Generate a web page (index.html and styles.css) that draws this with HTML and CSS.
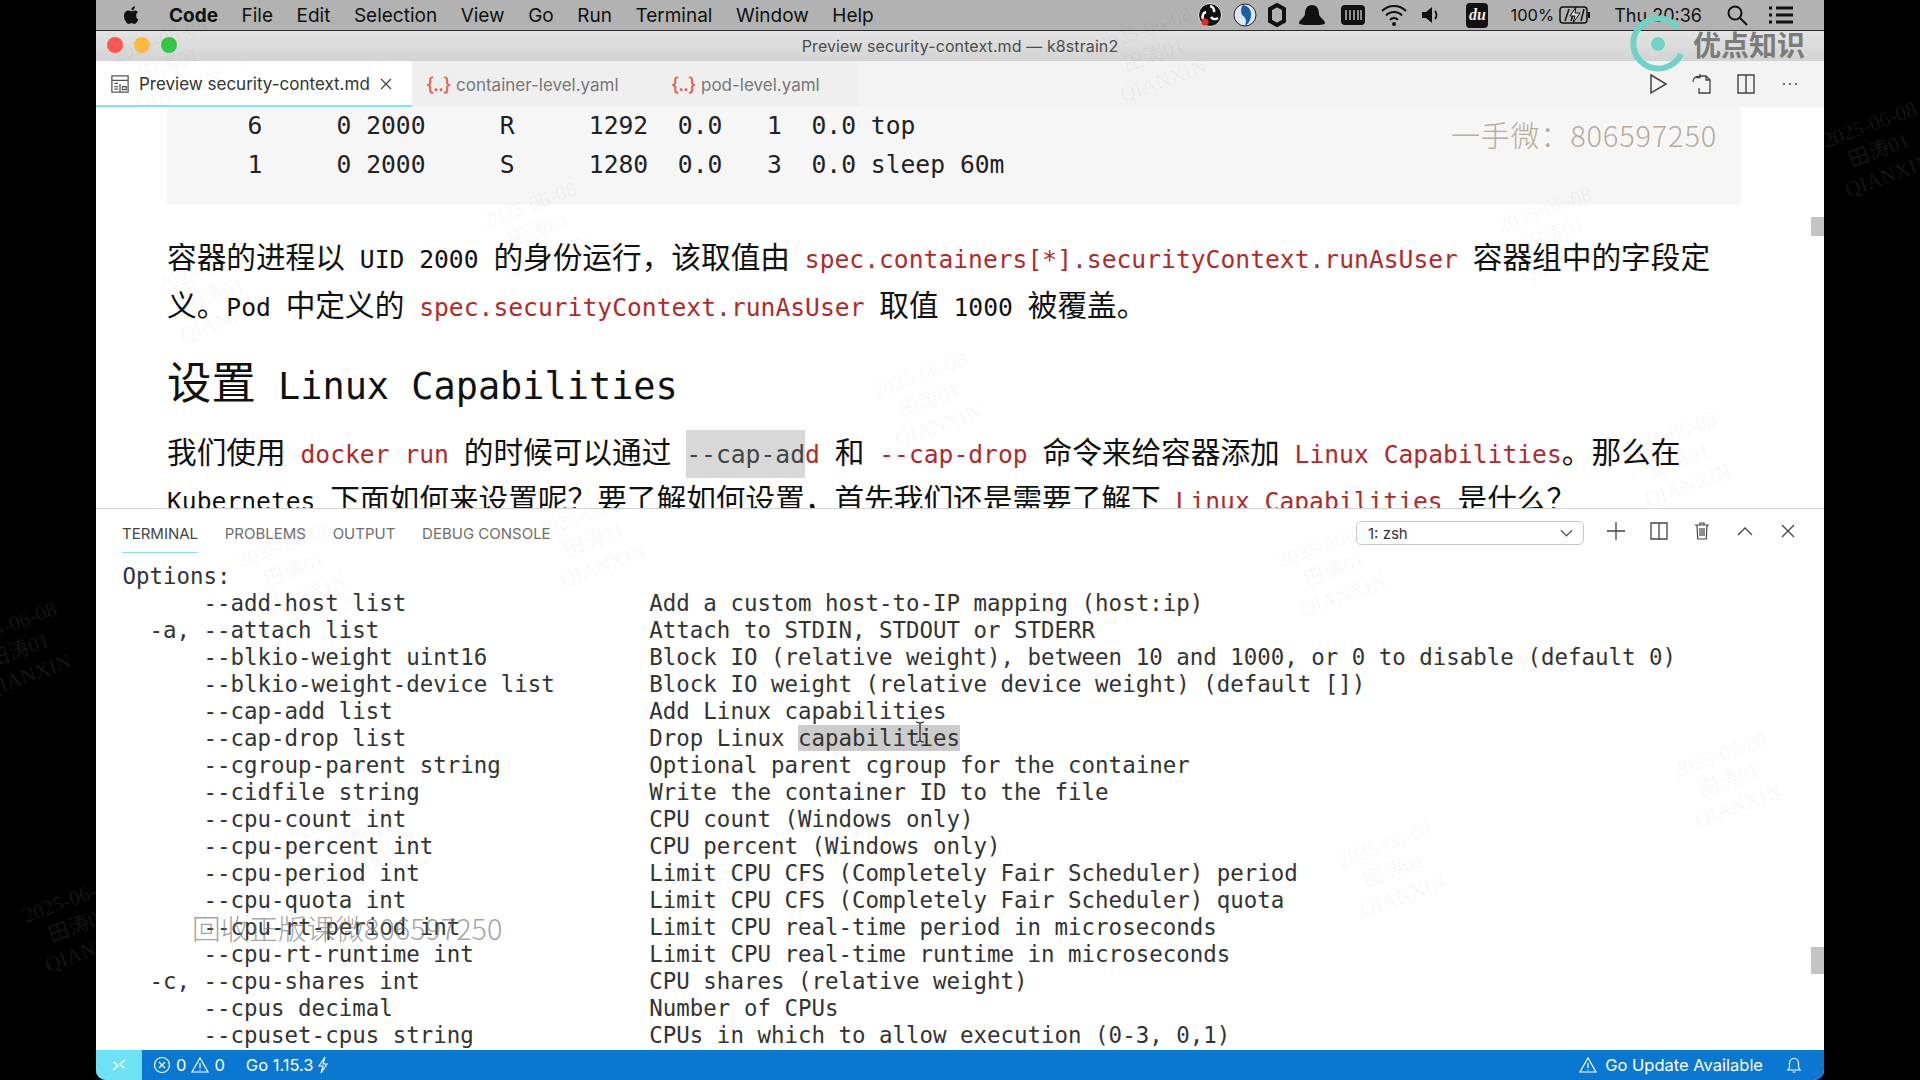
FILE: index.html
```html
<!DOCTYPE html>
<html lang="zh">
<head>
<meta charset="utf-8">
<title>Preview security-context.md — k8strain2</title>
<link rel="stylesheet" href="styles.css">
</head>
<body>
<div class="window">
  <header class="menubar">
    <svg class="apple" viewBox="0 0 20 24"><path d="M14.6 12.7c0-2.5 2-3.6 2.1-3.7-1.2-1.700-3-2-3.600-2-1.500-.2-3 .9-3.800.9S7.300 7 6 7c-1.700 0-3.200 1-4.100 2.500-1.700 3-.4 7.500 1.300 10 .8 1.200 1.800 2.600 3.100 2.500 1.200 0 1.700-.8 3.200-.8s1.900.8 3.200.8 2.200-1.200 3-2.400c1-1.400 1.400-2.700 1.400-2.800-.1 0-2.500-1-2.500-4.100zM12.200 5.300c.7-.8 1.100-2 1-3.100-1 0-2.200.7-2.900 1.500-.6.700-1.200 1.900-1 3 1.100.1 2.200-.6 2.900-1.400z"/></svg>
    <nav class="menus">
      <span class="menu-app">Code</span><span>File</span><span>Edit</span><span>Selection</span><span>View</span><span>Go</span><span>Run</span><span>Terminal</span><span>Window</span><span>Help</span>
    </nav>
    <div class="tray">
      <svg class="t-ic" viewBox="0 0 24 24"><circle cx="12" cy="12" r="11.500" fill="#111" stroke="#eee"/><path d="M12 3a5 5 0 0 1 4 6M20 15a5 5 0 0 1-7-1M5 16a5 5 0 0 1 3-7" fill="none" stroke="#fff" stroke-width="2.500"/><circle cx="7" cy="19" r="3.500" fill="#e8262a"/></svg>
      <svg class="t-ic" viewBox="0 0 24 24"><circle cx="12" cy="12" r="11" fill="#dfe6ee" stroke="#222"/><path d="M10 2c7 1 10 8 7 15-1 3-3 5-5 5 2-4 1-7-2-9-2-2-3-8 0-11z" fill="#1b5fa6"/></svg>
      <svg class="t-ic t-hex" viewBox="0 0 18 24"><path d="M9 2l7 4v12l-7 4-7-4V6z" fill="none" stroke="#111" stroke-width="4"/></svg>
      <svg class="t-ic t-wide" viewBox="0 0 28 24"><path d="M14 2c5 0 7 4 7 9 0 3 6 6 6 9 0 2-6 2-13 2S1 22 1 20c0-3 6-6 6-9 0-5 2-9 7-9z" fill="#111"/></svg>
      <svg class="t-ic t-wide" viewBox="0 0 26 24"><rect x="1" y="2" width="24" height="20" rx="4" fill="#111"/><path d="M6 7v10M10 7v10M14 7v10M18 7v10M21 7v10" stroke="#bbb" stroke-width="1.500"/></svg>
      <svg class="t-ic t-wide" viewBox="0 0 28 24"><path d="M2 8a17 17 0 0 1 24 0M6 12.500a11 11 0 0 1 16 0M10 17a5 5 0 0 1 8 0" fill="none" stroke="#111" stroke-width="2"/><circle cx="14" cy="21" r="2" fill="#111"/></svg>
      <svg class="t-ic t-vol" viewBox="0 0 20 24"><path d="M1 9h4l6-5v16l-6-5H1z" fill="#111"/><path d="M14 8c2 2 2 6 0 8" fill="none" stroke="#111" stroke-width="1.800"/></svg>
      <span class="t-du">du</span>
      <span class="t-pct">100%</span>
      <svg class="t-batt" viewBox="0 0 32 18"><rect x="1" y="1" width="27" height="16" rx="3" fill="none" stroke="#111" stroke-width="1.500"/><path d="M6 15L10 3M12 15l4-12M22 15l3-12" stroke="#111" stroke-width="1.500"/><path d="M17 1l-6 9h5l-2 7 7-10h-5z" fill="#ddd" stroke="#111"/><rect x="29" y="6" width="2" height="6" fill="#111"/></svg>
      <span class="t-clock">Thu 20:36</span>
      <svg class="t-ic t-search" viewBox="0 0 22 22"><circle cx="9" cy="9" r="6.500" fill="none" stroke="#111" stroke-width="2"/><path d="M14 14l7 7" stroke="#111" stroke-width="2"/></svg>
      <svg class="t-ic t-list" viewBox="0 0 26 20"><path d="M1 3h3M8 3h17M1 10h3M8 10h17M1 17h3M8 17h17" stroke="#111" stroke-width="3"/></svg>
    </div>
  </header>

  <div class="titlebar">
    <div class="lights"><i class="li-red"></i><i class="li-yellow"></i><i class="li-green"></i></div>
    <div class="title">Preview security-context.md — k8strain2</div>
  </div>

  <div class="tabbar">
    <div class="tab active">
      <svg class="prev-ic" viewBox="0 0 16 16"><path d="M1.500 1.500h13v13h-13zM1.500 5h13M8 8v6.500M3.500 7.500h3M3.500 10h3M3.500 12h3M10 10h3v2.500h-3z" fill="none" stroke="#555" stroke-width="1"/></svg>
      <span class="tab-label">Preview security-context.md</span>
      <svg class="tab-x" viewBox="0 0 14 14"><path d="M2 2l10 10M12 2L2 12" stroke="#444" stroke-width="1.300"/></svg>
    </div>
    <div class="tab tab-c"><span class="brace">{..}</span><span class="tab-label dim">container-level.yaml</span></div>
    <div class="tab tab-p"><span class="brace">{..}</span><span class="tab-label dim">pod-level.yaml</span></div>
    <div class="actions">
      <svg class="act" viewBox="0 0 24 24"><path d="M5 3l15 9-15 9z" fill="none" stroke="#444" stroke-width="1.500"/></svg>
      <svg class="act" viewBox="0 0 24 24"><path d="M10 4h6l4 4v13H9v-5M16 4v4h4M3 10a5 5 0 0 1 7-5M10 2v3.500H6.500" fill="none" stroke="#444" stroke-width="1.300"/></svg>
      <svg class="act" viewBox="0 0 24 24"><path d="M4 3h16v18H4zM12 3v18" fill="none" stroke="#444" stroke-width="1.400"/></svg>
      <svg class="act" viewBox="0 0 24 24"><circle cx="6" cy="12" r="1" fill="#444"/><circle cx="12" cy="12" r="1" fill="#444"/><circle cx="18" cy="12" r="1" fill="#444"/></svg>
    </div>
  </div>

  <main class="editor">
    <pre class="codeblock">    6     0 2000     R     1292  0.0   1  0.0 top
    1     0 2000     S     1280  0.0   3  0.0 sleep 60m</pre>
    <p class="para">容器的进程以<span class="l"> UID 2000 </span>的身份运行，该取值由<span class="l code"> spec.containers[*].securityContext.runAsUser </span>容器组中的字段定<br>义。<span class="l">Pod </span>中定义的<span class="l code"> spec.securityContext.runAsUser </span>取值<span class="l"> 1000 </span>被覆盖。</p>
    <h2 class="heading">设置<span class="hl"> Linux Capabilities</span></h2>
    <p class="para para-b">我们使用<span class="l code"> docker run </span>的时候可以通过<span class="l"> </span><span class="l mark">--cap-ad</span><span class="l code">d </span>和<span class="l code"> --cap-drop </span>命令来给容器添加<span class="l code"> Linux Capabilities</span>。那么在<br><span class="l">Kubernetes </span>下面如何来设置呢？要了解如何设置，首先我们还是需要了解下<span class="l code"> Linux Capabilities </span>是什么？</p>
    <div class="thumb thumb-top"></div>
  </main>

  <section class="panel">
    <div class="panel-head">
      <div class="ptabs">
        <span class="ptab on">TERMINAL</span><span class="ptab">PROBLEMS</span><span class="ptab">OUTPUT</span><span class="ptab">DEBUG CONSOLE</span>
      </div>
      <div class="ptools">
        <div class="select"><span>1: zsh</span><svg class="chev" viewBox="0 0 14 8"><path d="M1 1l6 6 6-6" fill="none" stroke="#555" stroke-width="1.300"/></svg></div>
        <svg class="pic" viewBox="0 0 20 20"><path d="M10 1v18M1 10h18" stroke="#444" stroke-width="1.300"/></svg>
        <svg class="pic" viewBox="0 0 20 20"><path d="M2 2h16v16H2zM10 2v16" fill="none" stroke="#444" stroke-width="1.300"/></svg>
        <svg class="pic" viewBox="0 0 20 20"><path d="M3 4h14M8 4V2h4v2M5 4l.7 14h8.600L15 4M8 7v8M10 7v8M12 7v8" fill="none" stroke="#444" stroke-width="1.200"/></svg>
        <svg class="pic" viewBox="0 0 20 20"><path d="M3 14l7-7 7 7" fill="none" stroke="#444" stroke-width="1.300"/></svg>
        <svg class="pic" viewBox="0 0 20 20"><path d="M4 4l12 12M16 4L4 16" stroke="#444" stroke-width="1.300"/></svg>
      </div>
    </div>
    <pre class="term">Options:
      --add-host list                  Add a custom host-to-IP mapping (host:ip)
  -a, --attach list                    Attach to STDIN, STDOUT or STDERR
      --blkio-weight uint16            Block IO (relative weight), between 10 and 1000, or 0 to disable (default 0)
      --blkio-weight-device list       Block IO weight (relative device weight) (default [])
      --cap-add list                   Add Linux capabilities
      --cap-drop list                  Drop Linux <span class="sel">capabilities</span>
      --cgroup-parent string           Optional parent cgroup for the container
      --cidfile string                 Write the container ID to the file
      --cpu-count int                  CPU count (Windows only)
      --cpu-percent int                CPU percent (Windows only)
      --cpu-period int                 Limit CPU CFS (Completely Fair Scheduler) period
      --cpu-quota int                  Limit CPU CFS (Completely Fair Scheduler) quota
      --cpu-rt-period int              Limit CPU real-time period in microseconds
      --cpu-rt-runtime int             Limit CPU real-time runtime in microseconds
  -c, --cpu-shares int                 CPU shares (relative weight)
      --cpus decimal                   Number of CPUs
      --cpuset-cpus string             CPUs in which to allow execution (0-3, 0,1)</pre>
    <div class="thumb thumb-bot"></div>
  </section>

  <footer class="status">
    <div class="remote"><svg class="rem-ic" viewBox="0 0 16 16"><path d="M2 13l5-4-4-4M14 3L9 7l4 4" fill="none" stroke="#fff" stroke-width="1.300"/></svg></div>
    <svg class="st-ic st-first" viewBox="0 0 18 18"><circle cx="9" cy="9" r="7.500" fill="none" stroke="#fff" stroke-width="1.200"/><path d="M6 6l6 6M12 6l-6 6" stroke="#fff" stroke-width="1.200"/></svg>
    <span class="st-num">0</span>
    <svg class="st-ic" viewBox="0 0 18 18"><path d="M9 2l8 14H1zM9 7v5M9 13.500v1" fill="none" stroke="#fff" stroke-width="1.200"/></svg>
    <span class="st-num">0</span>
    <span class="st-go">Go 1.15.3</span>
    <svg class="st-ic st-bolt" viewBox="0 0 12 18"><path d="M8 1L2 10h4l-2 7 6-9H6z" fill="none" stroke="#fff" stroke-width="1.100"/></svg>
    <div class="st-right">
      <svg class="st-ic" viewBox="0 0 18 18"><path d="M9 2l8 14H1zM9 7v5M9 13.500v1" fill="none" stroke="#fff" stroke-width="1.200"/></svg>
      <span class="st-up">Go Update Available</span>
      <svg class="st-ic st-bell" viewBox="0 0 18 18"><path d="M3 14c1-1 1.500-2 1.500-4V7a4.500 4.500 0 0 1 9 0v3c0 2 .5 3 1.500 4zM7.500 16h3" fill="none" stroke="#fff" stroke-width="1.200"/></svg>
    </div>
  </footer>
</div>

<div class="overlay">
  <div class="wm w1">2025-06-08<br>田涛01<br>QIANXIN</div>
  <div class="wm w2">2025-06-08<br>田涛01<br>QIANXIN</div>
  <div class="wm w3">2025-06-08<br>田涛01<br>QIANXIN</div>
  <div class="wm w4">2025-06-08<br>田涛01<br>QIANXIN</div>
  <div class="wm w5">2025-06-08<br>田涛01<br>QIANXIN</div>
  <div class="wm w6">2025-06-08<br>田涛01<br>QIANXIN</div>
  <div class="wm w7">2025-06-08<br>田涛01<br>QIANXIN</div>
  <div class="wm w8">2025-06-08<br>田涛01<br>QIANXIN</div>
  <div class="wm w9">2025-06-08<br>田涛01<br>QIANXIN</div>
  <div class="wm w10">2025-06-08<br>田涛01<br>QIANXIN</div>
  <div class="wm w11">2025-06-08<br>田涛01<br>QIANXIN</div>
  <div class="wm w12">2025-06-08<br>田涛01<br>QIANXIN</div>
  <div class="wm w13">2025-06-08<br>田涛01<br>QIANXIN</div>
  <div class="wm w14 dk">2025-06-08<br>田涛01<br>QIANXIN</div>
  <div class="wm w15 dk">2025-06-08<br>田涛01<br>QIANXIN</div>
  <div class="wm w16 dk">2025-06-08<br>田涛01<br>QIANXIN</div>

  <div class="logo">
    <svg class="logo-ic" viewBox="0 0 60 60"><path d="M50 14A25 25 0 1 0 53 40" fill="none" stroke="#6fd4c5" stroke-width="6"/><circle cx="30" cy="30" r="7" fill="#6fd4c5"/></svg>
    <span class="logo-t">优点知识</span>
  </div>
  <div class="wx">一手微：806597250</div>
  <div class="recycle">回收正版课微806597250</div>
  <svg class="ibeam" viewBox="0 0 12 22"><path d="M2 1c2 0 4 1 4 2v16c0 1-2 2-4 2M10 1C8 1 6 2 6 3v16c0 1 2 2 4 2" fill="none" stroke="#222" stroke-width="1.200"/></svg>
</div>
</body>
</html>
```

FILE: styles.css
```css
* { box-sizing: border-box; }
html, body { margin: 0; height: 100%; }
body {
  background: #000;
  overflow: hidden;
  font-family: Inter, "Noto Sans", "Noto Sans CJK SC", sans-serif;
  position: relative;
}
.window {
  width: 1728px;
  height: 1080px;
  margin: 0 auto;
  background: #fff;
  display: flex;
  flex-direction: column;
  overflow: hidden;
  border-radius: 0 0 10px 10px;
}

/* mac menu bar */
.menubar {
  height: 31px;
  flex: none;
  background: #b2b2b2;
  border-bottom: 1px solid #2a2a2a;
  display: flex;
  align-items: center;
  color: #111;
  font-size: 19px;
  padding-left: 27px;
}
.apple { width: 18px; height: 22px; fill: #111; flex: none; }
.menus { display: flex; gap: 23.500px; margin-left: 28px; white-space: nowrap; }
.menu-app { font-weight: 700; }
.tray { display: flex; align-items: center; margin-left: auto; }
.t-ic { width: 24px; height: 24px; margin-right: 11px; flex: none; }
.t-hex { width: 18px; margin-right: 12px; }
.t-wide { width: 28px; margin-right: 13px; }
.t-vol { width: 20px; margin-right: 25px; }
.t-du {
  width: 22px; height: 25px; border-radius: 4px; background: #111; color: #eee;
  font: italic 700 16px "Liberation Serif", serif; display: flex; align-items: center; justify-content: center;
  margin-right: 22px;
}
.t-pct { font-size: 16.500px; margin-right: 5px; }
.t-batt { width: 32px; height: 18px; margin-right: 23px; }
.t-clock { font-size: 18px; margin-right: 24px; white-space: nowrap; }
.t-search { width: 22px; height: 22px; margin-right: 20px; }
.t-list { width: 26px; height: 20px; margin-right: 30px; }

/* window title */
.titlebar {
  height: 30px;
  flex: none;
  background: linear-gradient(#e4e4e4, #d3d3d3);
  display: flex;
  align-items: center;
  justify-content: center;
  position: relative;
}
.lights { position: absolute; left: 11px; top: 6px; display: flex; gap: 11px; }
.lights i { width: 16px; height: 16px; border-radius: 50%; display: block; }
.li-red { background: #fc5753; }
.li-yellow { background: #fdbc40; }
.li-green { background: #33c748; }
.title { font-size: 16px; color: #4d4d4d; letter-spacing: .1px; }

/* tabs */
.tabbar {
  height: 46px;
  flex: none;
  background: #f3f3f3;
  display: flex;
  align-items: stretch;
}
.tab {
  display: flex;
  align-items: center;
  background: #efefef;
  font-size: 17px;
  white-space: nowrap;
  padding-top: 1px;
}
.tab.active {
  width: 316px;
  background: #fff;
  border-bottom: 2px solid #7fe6ee;
  padding-left: 14px;
  color: #333;
}
.tab-c { width: 245px; padding-left: 14px; }
.tab-p { width: 201px; padding-left: 14px; }
.prev-ic { width: 20px; height: 20px; margin-right: 9px; flex: none; }
.tab-x { width: 14px; height: 14px; margin-left: 9px; flex: none; }
.brace { color: #ec5a4e; font-size: 19px; font-weight: 500; margin-right: 10px; letter-spacing: -1px; width: 20px; }
.dim { color: #777; }
.actions { margin-left: auto; display: flex; align-items: center; gap: 20px; padding-right: 22px; }
.act { width: 24px; height: 24px; flex: none; }

/* markdown preview */
.editor {
  flex: 1;
  min-height: 0;
  padding: 0 83px 0 71px;
  overflow: hidden;
  position: relative;
  color: #111;
}
.codeblock {
  margin: -1px 0 0;
  background: #f6f6f6;
  border-radius: 0 0 4px 4px;
  font: 24.660px/39px "DejaVu Sans Mono", monospace;
  padding: 0 0 21px 21px;
  color: #222;
}
.para {
  margin: 27px 0 0;
  font: 29.660px/47.500px "Noto Sans CJK SC", sans-serif;
  white-space: pre;
}
.para-b { margin-top: 19px; line-height: 47px; }
.l { font-family: "DejaVu Sans Mono", monospace; font-size: 24.660px; line-height: 1; }
.l.code { color: #b12a2a; }
.l.mark { background: #d8d8d8; color: #444; padding: 10px 0 9px; }
.heading {
  margin: 25px 0 0;
  font: 400 44.400px/56px "Noto Sans CJK SC", sans-serif;
  white-space: pre;
}
.hl { font-family: "DejaVu Sans Mono", monospace; font-size: 36.900px; line-height: 1; }
.thumb { position: absolute; right: 0; width: 13px; background: #c4c4c4; }
.thumb-top { top: 110px; height: 19px; }
.thumb-bot { top: 438px; height: 27px; }

/* terminal panel */
.panel {
  height: 542px;
  flex: none;
  border-top: 1px solid #d4d4d4;
  position: relative;
  background: #fff;
}
.panel-head {
  height: 54px;
  display: flex;
  justify-content: space-between;
  padding: 0 26px 0 26px;
}
.ptabs { display: flex; gap: 26.700px; }
.ptab {
  font-size: 15px;
  color: #6e6e6e;
  height: 44px;
  line-height: 50px;
}
.ptab.on { color: #444; border-bottom: 1px solid #7fe6ee; }
.ptools { display: flex; align-items: flex-start; padding-top: 12px; }
.select {
  width: 228px;
  height: 24px;
  border: 1px solid #c8c8c8;
  border-radius: 5px;
  padding: 0 10px 0 11px;
  font-size: 15px;
  color: #333;
  display: flex;
  align-items: center;
  justify-content: space-between;
  margin-right: 22px;
}
.chev { width: 13px; height: 8px; }
.pic { width: 20px; height: 20px; margin-right: 23px; flex: none; }
.pic:last-child { margin-right: 0; }
.term {
  margin: 0;
  padding: 0 0 0 26.500px;
  font: 22.440px/27px "DejaVu Sans Mono", monospace;
  color: #333;
}
.sel { background: #cccccc; }

/* status bar */
.status {
  height: 30px;
  flex: none;
  background: #0a78d0;
  color: #fff;
  display: flex;
  align-items: center;
  font-size: 16.500px;
}
.remote {
  width: 46px;
  height: 100%;
  background: #6fe3f5;
  display: flex;
  align-items: center;
  justify-content: center;
}
.rem-ic { width: 16px; height: 16px; }
.st-ic { width: 18px; height: 18px; flex: none; }
.st-first { margin-left: 11px; }
.st-num { margin: 0 5px 0 5px; }
.st-go { margin-left: 16px; }
.st-bolt { width: 12px; margin-left: 3px; }
.st-right { margin-left: auto; display: flex; align-items: center; padding-right: 21px; }
.st-up { margin-left: 8px; }
.st-bell { margin-left: 22px; }

/* overlays burned into the video */
.overlay { position: absolute; inset: 0; pointer-events: none; overflow: hidden; }
.wm {
  position: absolute;
  transform: rotate(-20deg);
  color: rgba(0, 0, 0, .05);
  font: 21px/27px "Liberation Serif", "Noto Sans CJK SC", serif;
  text-align: center;
  white-space: nowrap;
}
.wm.dk { color: rgba(255, 255, 255, .09); }
.w1 { left: 120px; top: 25px; }
.w2 { left: 1105px; top: 15px; }
.w3 { left: 490px; top: 190px; }
.w4 { left: 165px; top: 255px; }
.w5 { left: 1505px; top: 195px; }
.w6 { left: 880px; top: 360px; }
.w7 { left: 1630px; top: 420px; }
.w8 { left: 545px; top: 500px; }
.w9 { left: 245px; top: 530px; }
.w10 { left: 1285px; top: 530px; }
.w11 { left: 1680px; top: 740px; }
.w12 { left: 1345px; top: 830px; }
.w13 { left: 305px; top: 800px; }
.w14 { left: -30px; top: 610px; }
.w15 { left: 1830px; top: 110px; }
.w16 { left: 30px; top: 885px; }

.logo { position: absolute; left: 1628px; top: 14px; display: flex; align-items: center; }
.logo-ic { width: 60px; height: 60px; flex: none; }
.logo-t { font: 700 28px "Noto Sans CJK SC", sans-serif; color: #7b7b7b; margin-left: 5px; line-height: 1; }
.wx {
  position: absolute; left: 1451px; top: 114px;
  font: 300 29px/40px "Noto Sans CJK SC", sans-serif;
  color: #b9ac9c;
  letter-spacing: .8px;
}
.recycle {
  position: absolute; left: 192px; top: 908px;
  font: 300 28.700px/40px "Noto Sans CJK SC", sans-serif;
  color: rgba(110, 110, 110, .65);
}
.ibeam { position: absolute; left: 914px; top: 721px; width: 12px; height: 22px; }
```
